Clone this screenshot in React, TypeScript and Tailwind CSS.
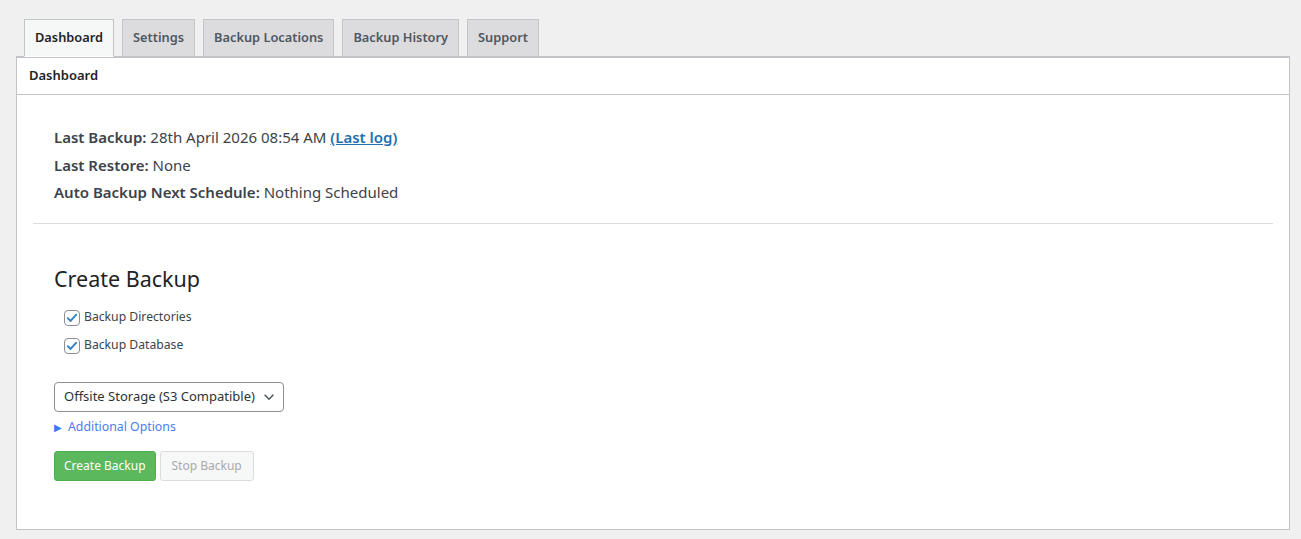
import React from "react";

const tabs = ["Dashboard", "Settings", "Backup Locations", "Backup History", "Support"];

const CheckRow = ({ label }: { label: string }) => (
  <label className="flex items-center gap-[4px] h-[28px] text-[12.2px] text-[#3c434a]">
    <span className="w-[16px] h-[16px] rounded-[4px] border border-[#8c8f94] bg-white flex items-center justify-center">
      <svg viewBox="0 0 16 16" className="w-[14px] h-[14px]">
        <path d="M3.2 8.2 L6.4 11.4 L12.8 4.2" fill="none" stroke="#3582c4" strokeWidth="2.2" strokeLinecap="round" strokeLinejoin="round" />
      </svg>
    </span>
    {label}
  </label>
);

const App = () => {
  return (
    <div
      className="min-h-[539px] bg-[#f0f0f1] pt-[19px] pl-[16px] pr-[11px] text-[#1d2327]"
      style={{ fontFamily: '"Noto Sans", "Open Sans", Arial, sans-serif' }}
    >
      <div className="flex gap-[8px] pl-[8px]">
        {tabs.map((t, i) => (
          <div
            key={t}
            className={`h-[38px] px-[10px] flex items-center border border-[#c3c4c7] text-[12.8px] font-semibold -mb-[1px] ${
              i === 0 ? "bg-[#f6f7f7] text-[#1d2327] border-b-white relative z-10" : "bg-[#dcdcde] text-[#50575e]"
            }`}
          >
            {t}
          </div>
        ))}
      </div>
      <div className="bg-white border border-[#c3c4c7] border-t-2">
        <div className="h-[37px] flex items-center px-[12px] border-b border-[#c3c4c7] text-[13px] font-semibold">
          Dashboard
        </div>
        <div className="px-[16px] pt-[29px] pb-[48px]">
          <div className="px-[21px] text-[15px] text-[#3c434a] leading-[27.5px] pb-[16px]">
            <div>
              <b className="font-semibold">Last Backup:</b> 28th April 2026 08:54 AM{" "}
              <a className="font-semibold text-[#2271b1] underline">(Last log)</a>
            </div>
            <div>
              <b className="font-semibold">Last Restore:</b> None
            </div>
            <div>
              <b className="font-semibold">Auto Backup Next Schedule:</b> Nothing Scheduled
            </div>
          </div>
          <div className="border-t border-[#dcdcde]" />
          <div className="px-[21px] pt-[40px]">
            <h2 className="text-[21.5px] leading-[30px] text-[#1d2327] mb-[10px]">Create Backup</h2>
            <div className="pl-[10px]">
              <CheckRow label="Backup Directories" />
              <CheckRow label="Backup Database" />
            </div>
            <div className="mt-[22px] w-[230px] h-[30px] border border-[#8c8f94] rounded-[4px] flex items-center justify-between pl-[9px] pr-[7px] text-[13px] text-[#2c3338] whitespace-nowrap">
              <span>Offsite Storage (S3 Compatible)</span>
              <svg viewBox="0 0 16 16" className="w-[14px] h-[14px] shrink-0">
                <path d="M3 5.5 L8 10.5 L13 5.5" fill="none" stroke="#50575e" strokeWidth="1.8" />
              </svg>
            </div>
            <div className="mt-[6px] flex items-center gap-[6px] text-[12.3px] text-[#4a7cf2]">
              <span className="text-[10px] leading-none text-[#3b7cf0]">▶</span>
              <span>Additional Options</span>
            </div>
            <div className="mt-[15px] flex gap-[4px]">
              <button className="h-[30px] px-[9px] bg-[#5cb85c] border border-[#4cae4c] rounded-[3px] text-white text-[12px]">
                Create Backup
              </button>
              <button className="h-[30px] px-[11px] bg-[#f6f7f7] border border-[#dcdcde] rounded-[3px] text-[#a7aaad] text-[12px]">
                Stop Backup
              </button>
            </div>
          </div>
        </div>
      </div>
    </div>
  );
};

export default App;
